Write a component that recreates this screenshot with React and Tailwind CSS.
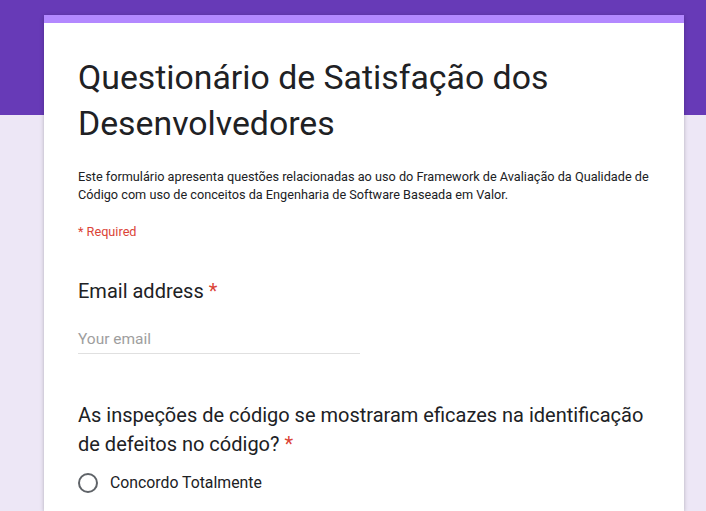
export default function App() {
  return (
    <div
      className="min-h-[511px] bg-[#ede7f6] relative overflow-hidden"
      style={{ fontFamily: "Roboto, 'Noto Sans', sans-serif" }}
    >
      {/* purple header band */}
      <div className="absolute top-0 left-0 right-0 h-[115px] bg-[#673ab7]" />

      <div className="relative pt-[15px] pl-[44px]">
        <div className="w-[640px]">
          {/* title card */}
          <div className="bg-white shadow-[0_1px_4px_rgba(0,0,0,0.25)] border-t-[8px] border-[#b388ff]">
            <div className="px-[34px] pt-[32px] pb-[16px]">
              <h1 className="text-[33.8px] leading-[46px] text-[#202124] font-normal">
                Questionário de Satisfação dos Desenvolvedores
              </h1>
              <p className="mt-[21px] text-[12.7px] leading-[18px] text-[#202124]">
                Este formulário apresenta questões relacionadas ao uso do Framework de Avaliação da Qualidade de
                Código com uso de conceitos da Engenharia de Software Baseada em Valor.
              </p>
              <p className="mt-[19px] text-[12.7px] leading-[18px] text-[#db4437]">* Required</p>

              {/* email */}
              <div className="mt-[36px]">
                <div className="text-[20px] leading-[28px] text-[#202124]">
                  Email address <span className="text-[#db4437]">*</span>
                </div>
                <div className="mt-[22px] w-[282px] border-b border-[#e0e0e0] pb-[2px] text-[15.5px] leading-[24px] text-[#9e9e9e]">
                  Your email
                </div>
              </div>

              {/* question */}
              <div className="mt-[47px]">
                <div className="text-[20px] leading-[29px] text-[#202124]">
                  As inspeções de código se mostraram eficazes na identificação de defeitos no código?{" "}
                  <span className="text-[#db4437]">*</span>
                </div>
                <div className="mt-[12px] flex items-center gap-[12px]">
                  <div className="w-[20px] h-[20px] rounded-full border-2 border-[#5f6368]" />
                  <span className="text-[15.8px] text-[#202124]">Concordo Totalmente</span>
                </div>
              </div>
            </div>
          </div>
        </div>
      </div>
    </div>
  );
}
